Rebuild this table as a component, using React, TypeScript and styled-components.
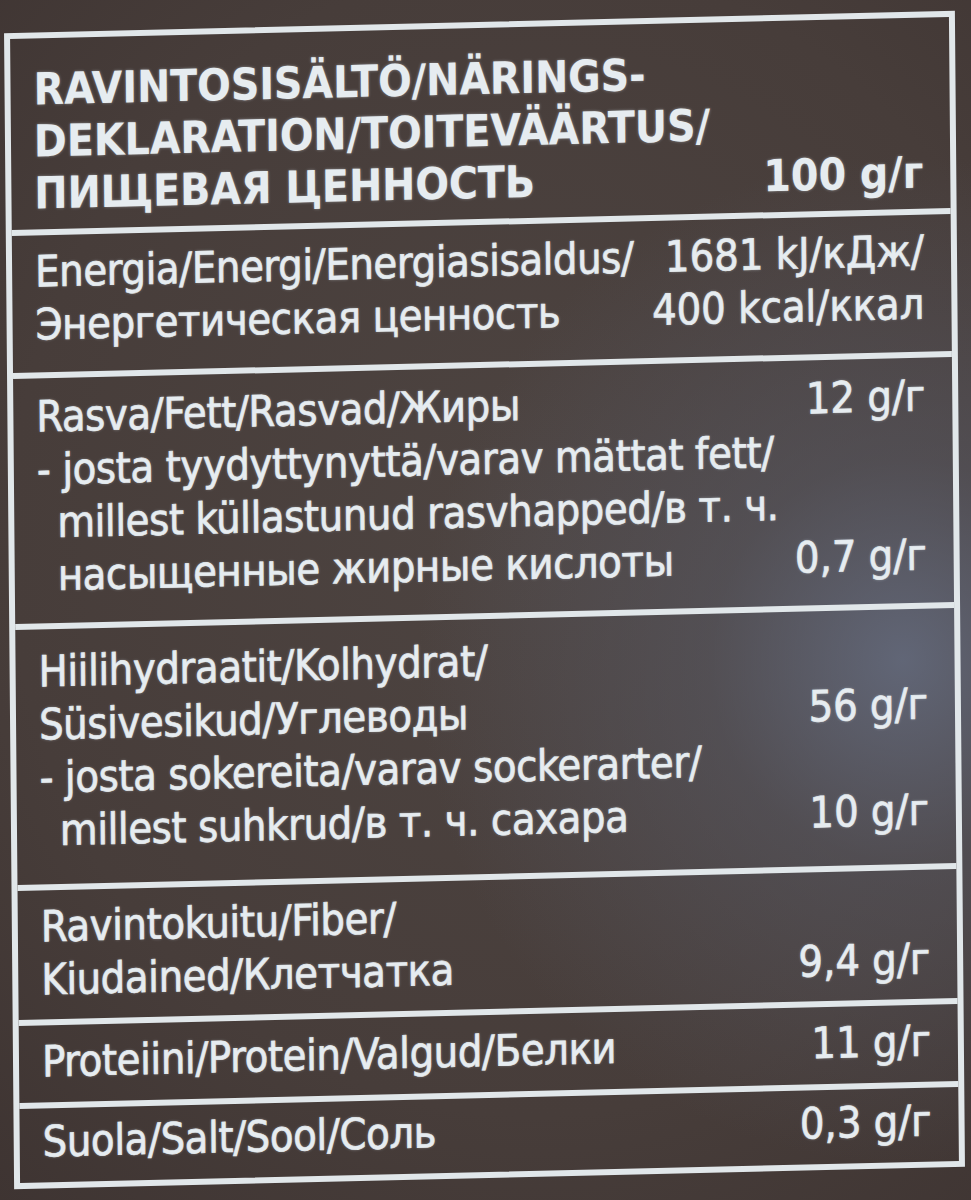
import React from "react";
import styled, { createGlobalStyle } from "styled-components";

const GlobalStyle = createGlobalStyle`
  html, body { margin: 0; padding: 0; }
  body { background: #3f3533; }
`;

const Page = styled.div`
  width: 971px;
  height: 1200px;
  overflow: hidden;
  box-sizing: border-box;
  padding: 22px 11px 0 9px;
  background:
    radial-gradient(ellipse 50% 42% at 93% 55%, rgba(105, 115, 138, 0.75) 0%, rgba(92, 96, 110, 0.45) 40%, rgba(80, 72, 72, 0) 100%),
    radial-gradient(ellipse 90% 80% at 55% 45%, #4d4441 0%, #473d3a 60%, #3c3230 100%);
  font-family: "DejaVu Sans Condensed", "Liberation Sans", sans-serif;
  color: #e6ecf0;
`;

const Table = styled.div`
  height: 1156px;
  box-sizing: border-box;
  border: 6px solid #e1e7ea;
  display: flex;
  flex-direction: column;
  transform: rotate(-0.5deg) skewY(-0.85deg);
  transform-origin: 50% 50%;
`;

const Section = styled.div<{ $h: number; $pt: number; $last?: boolean }>`
  height: ${(p) => p.$h}px;
  flex: none;
  box-sizing: border-box;
  padding: ${(p) => p.$pt}px 27px 0 23px;
  border-bottom: ${(p) => (p.$last ? "none" : "6px solid #e1e7ea")};
  display: flex;
  flex-direction: column;
`;

const Line = styled.div<{ $indent?: number; $head?: boolean }>`
  display: flex;
  justify-content: space-between;
  align-items: baseline;
  gap: 20px;
  height: ${(p) => (p.$head ? 52 : 53)}px;
  line-height: ${(p) => (p.$head ? 52 : 53)}px;
  padding-left: ${(p) => p.$indent ?? 0}px;
  white-space: nowrap;
  font-size: ${(p) => (p.$head ? 44 : 43)}px;
  font-weight: ${(p) => (p.$head ? 700 : 400)};
  letter-spacing: ${(p) => (p.$head ? 0 : -0.4)}px;
  -webkit-text-stroke: ${(p) => (p.$head ? 0 : 0.6)}px #e6ecf0;
  text-shadow: 0 0 3px rgba(225, 235, 245, 0.45);
`;

const Label = styled.span``;

const Value = styled.span<{ $head?: boolean }>`
  font-weight: ${(p) => (p.$head ? 700 : 400)};
  font-size: ${(p) => (p.$head ? 44 : 43)}px;
  letter-spacing: 0;
`;

type Row = { text: string; value?: string; indent?: number };
type Block = { h: number; pt: number; head?: boolean; rows: Row[] };

const blocks: Block[] = [
  {
    h: 197,
    pt: 25,
    head: true,
    rows: [
      { text: "RAVINTOSISÄLTÖ/NÄRINGS-" },
      { text: "DEKLARATION/TOITEVÄÄRTUS/" },
      { text: "ПИЩЕВАЯ ЦЕННОСТЬ", value: "100 g/г" },
    ],
  },
  {
    h: 143,
    pt: 10,
    rows: [
      { text: "Energia/Energi/Energiasisaldus/", value: "1681 kJ/кДж/" },
      { text: "Энергетическая ценность", value: "400 kcal/ккал" },
    ],
  },
  {
    h: 251,
    pt: 12,
    rows: [
      { text: "Rasva/Fett/Rasvad/Жиры", value: "12 g/г" },
      { text: "- josta tyydyttynyttä/varav mättat fett/" },
      { text: "millest küllastunud rasvhapped/в т. ч.", indent: 20 },
      { text: "насыщенные жирные кислоты", value: "0,7 g/г", indent: 20 },
    ],
  },
  {
    h: 261,
    pt: 16,
    rows: [
      { text: "Hiilihydraatit/Kolhydrat/" },
      { text: "Süsivesikud/Углеводы", value: "56 g/г" },
      { text: "- josta sokereita/varav sockerarter/" },
      { text: "millest suhkrud/в т. ч. сахара", value: "10 g/г", indent: 20 },
    ],
  },
  {
    h: 135,
    pt: 10,
    rows: [
      { text: "Ravintokuitu/Fiber/" },
      { text: "Kiudained/Клетчатка", value: "9,4 g/г" },
    ],
  },
  {
    h: 83,
    pt: 10,
    rows: [{ text: "Proteiini/Protein/Valgud/Белки", value: "11 g/г" }],
  },
  {
    h: 74,
    pt: 7,
    rows: [{ text: "Suola/Salt/Sool/Соль", value: "0,3 g/г" }],
  },
];

export default function App() {
  return (
    <>
      <GlobalStyle />
      <Page>
        <Table>
          {blocks.map((b, i) => (
            <Section key={i} $h={b.h} $pt={b.pt} $last={i === blocks.length - 1}>
              {b.rows.map((r, j) => (
                <Line key={j} $head={b.head} $indent={r.indent}>
                  <Label>{r.text}</Label>
                  {r.value && <Value $head={b.head}>{r.value}</Value>}
                </Line>
              ))}
            </Section>
          ))}
        </Table>
      </Page>
    </>
  );
}
